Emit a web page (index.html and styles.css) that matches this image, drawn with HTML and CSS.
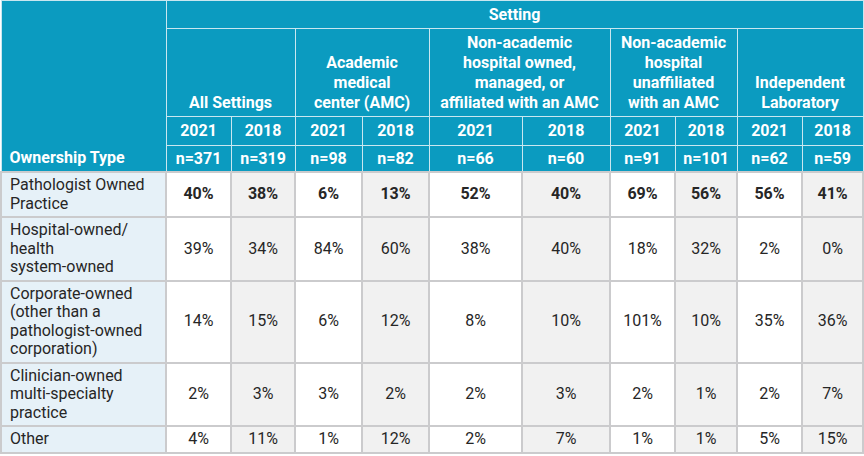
FILE: index.html
```html
<!DOCTYPE html>
<html lang="en">
<head>
<meta charset="utf-8">
<title>Ownership Type by Setting</title>
<link rel="stylesheet" href="styles.css">
</head>
<body>
<table class="tbl">
  <colgroup>
    <col class="c-label">
    <col class="c-65"><col class="c-64">
    <col class="c-67"><col class="c-67">
    <col class="c-93"><col class="c-88">
    <col class="c-65"><col class="c-62">
    <col class="c-65"><col class="c-61">
  </colgroup>
  <thead>
    <tr class="r-setting">
      <th rowspan="4" class="own">Ownership Type</th>
      <th colspan="10" class="setting">Setting</th>
    </tr>
    <tr class="r-group">
      <th colspan="2">All Settings</th>
      <th colspan="2">Academic<br>medical<br>center (AMC)</th>
      <th colspan="2">Non-academic<br>hospital owned,<br>managed, or<br>affiliated with an AMC</th>
      <th colspan="2">Non-academic<br>hospital<br>unaffiliated<br>with an AMC</th>
      <th colspan="2">Independent<br>Laboratory</th>
    </tr>
    <tr class="r-year">
      <th>2021</th><th>2018</th><th>2021</th><th>2018</th><th>2021</th><th>2018</th><th>2021</th><th>2018</th><th>2021</th><th>2018</th>
    </tr>
    <tr class="r-n">
      <th>n=371</th><th>n=319</th><th>n=98</th><th>n=82</th><th>n=66</th><th>n=60</th><th>n=91</th><th>n=101</th><th>n=62</th><th>n=59</th>
    </tr>
  </thead>
  <tbody>
    <tr class="bold">
      <td class="lbl">Pathologist Owned<br>Practice</td>
      <td>40%</td><td class="alt">38%</td><td>6%</td><td class="alt">13%</td><td>52%</td><td class="alt">40%</td><td>69%</td><td class="alt">56%</td><td>56%</td><td class="alt">41%</td>
    </tr>
    <tr>
      <td class="lbl">Hospital-owned/<br>health<br>system-owned</td>
      <td>39%</td><td class="alt">34%</td><td>84%</td><td class="alt">60%</td><td>38%</td><td class="alt">40%</td><td>18%</td><td class="alt">32%</td><td>2%</td><td class="alt">0%</td>
    </tr>
    <tr>
      <td class="lbl">Corporate-owned<br>(other than a<br>pathologist-owned<br>corporation)</td>
      <td>14%</td><td class="alt">15%</td><td>6%</td><td class="alt">12%</td><td>8%</td><td class="alt">10%</td><td>101%</td><td class="alt">10%</td><td>35%</td><td class="alt">36%</td>
    </tr>
    <tr>
      <td class="lbl">Clinician-owned<br>multi-specialty<br>practice</td>
      <td>2%</td><td class="alt">3%</td><td>3%</td><td class="alt">2%</td><td>2%</td><td class="alt">3%</td><td>2%</td><td class="alt">1%</td><td>2%</td><td class="alt">7%</td>
    </tr>
    <tr>
      <td class="lbl">Other</td>
      <td>4%</td><td class="alt">11%</td><td>1%</td><td class="alt">12%</td><td>2%</td><td class="alt">7%</td><td>1%</td><td class="alt">1%</td><td>5%</td><td class="alt">15%</td>
    </tr>
  </tbody>
</table>
</body>
</html>
```

FILE: styles.css
```css
html, body {
  margin: 0;
  padding: 0;
  background: #ffffff;
}

.tbl {
  border-collapse: collapse;
  table-layout: fixed;
  width: 862px;
  font-family: Roboto, "Liberation Sans", Arial, sans-serif;
  font-size: 16px;
  color: #262626;
}

.c-label { width: 165px; }
.c-65 { width: 65px; }
.c-64 { width: 64px; }
.c-67 { width: 67px; }
.c-93 { width: 93px; }
.c-88 { width: 88px; }
.c-62 { width: 62px; }
.c-61 { width: 61px; }

.tbl th {
  background: #0b9bc0;
  color: #ffffff;
  font-weight: 700;
  text-align: center;
  border: 1px solid #c9e7f0;
  line-height: 20px;
  padding: 0 1px;
}

.r-setting th {
  height: 27px;
  vertical-align: middle;
}

.r-group th {
  height: 88px;
  vertical-align: bottom;
  padding-bottom: 3px;
  box-sizing: border-box;
}

.r-year th {
  height: 28px;
  vertical-align: middle;
}

.r-n th {
  height: 25px;
  vertical-align: middle;
}

.tbl th.own {
  text-align: left;
  vertical-align: bottom;
  padding: 0 8px 3px 8px;
}

.tbl td {
  border: 2px solid #cbcbcd;
  background: #ffffff;
  text-align: center;
  vertical-align: middle;
  line-height: 18.5px;
  padding: 3px 2px;
}

.tbl td.alt {
  background: #f1f1f1;
}

.tbl td.lbl {
  background: #e6f1f8;
  text-align: left;
  padding: 3px 8px;
}

.bold td {
  font-weight: 700;
}

.bold td.lbl {
  font-weight: 400;
}
```
